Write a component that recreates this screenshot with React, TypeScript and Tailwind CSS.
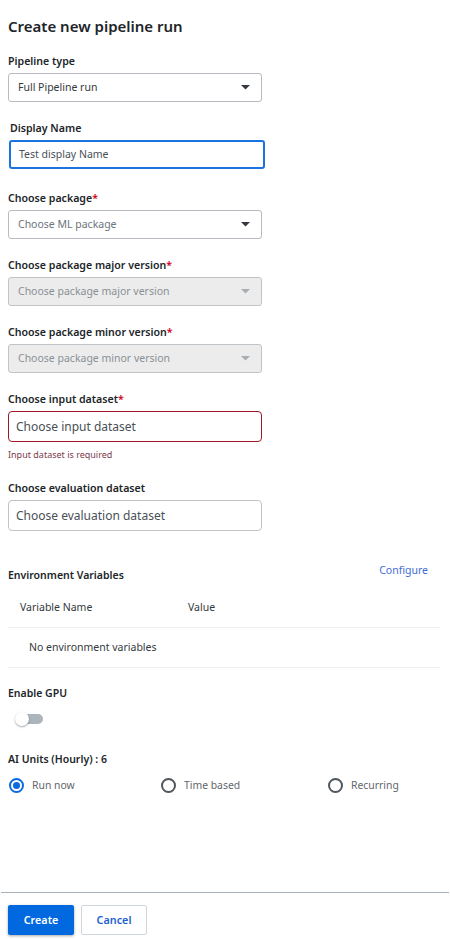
import type { ReactNode } from 'react'

const font = { fontFamily: '"Noto Sans", "Open Sans", Arial, sans-serif' }

function Label({ children, required, className = '' }: { children: ReactNode; required?: boolean; className?: string }) {
  return (
    <div className={`text-[10.6px] leading-4 font-semibold text-[#212529] mb-1 ${className}`}>
      {children}
      {required && <span className="text-[#d0021b]">*</span>}
    </div>
  )
}

function Caret({ muted }: { muted?: boolean }) {
  return (
    <svg width="9" height="5" viewBox="0 0 9 5" className="shrink-0">
      <path d="M0 0 L9 0 L4.5 4.5 Z" fill={muted ? '#a7adb3' : '#343a40'} />
    </svg>
  )
}

function Select({ value, placeholder, disabled }: { value?: string; placeholder?: string; disabled?: boolean }) {
  return (
    <div
      className={`w-[254px] h-[29px] rounded-[3px] border flex items-center justify-between pl-[9px] pr-[11px] text-[10.5px] ${
        disabled ? 'bg-[#ececec] border-[#bfc4c8] text-[#8a9096]' : 'bg-white border-[#b6bcc2]'
      }`}
    >
      <span className={value ? 'text-[#343a40]' : disabled ? '' : 'text-[#6c757d]'}>{value ?? placeholder}</span>
      <Caret muted={disabled} />
    </div>
  )
}

function Radio({ label, checked }: { label: string; checked?: boolean }) {
  return (
    <div className="flex items-center gap-[8px]">
      <span
        className={`w-[15px] h-[15px] rounded-full border-2 flex items-center justify-center ${
          checked ? 'border-[#0b6bde]' : 'border-[#4f565c]'
        }`}
      >
        {checked && <span className="w-[7px] h-[7px] rounded-full bg-[#0b6bde]" />}
      </span>
      <span className="text-[10.4px] text-[#5f666c]">{label}</span>
    </div>
  )
}

export default function App() {
  return (
    <div style={font} className="w-[450px] h-[939px] bg-white flex flex-col">
      <div className="flex-1 flex flex-col px-2 pt-[14px]">
        <h1 className="text-[15px] leading-6 font-semibold text-[#212529]">Create new pipeline run</h1>

        <div className="mt-[15px]">
          <Label>Pipeline type</Label>
          <Select value="Full Pipeline run" />
        </div>

        <div className="mt-[18px]">
          <Label className="ml-[2px]">Display Name</Label>
          <div className="ml-px w-[256px] h-[29px] rounded-[3px] border-2 border-[#1a73e0] flex items-center pl-[8px] text-[10.5px] text-[#495057]">
            Test display Name
          </div>
        </div>

        <div className="mt-[21px]">
          <Label required>Choose package</Label>
          <Select placeholder="Choose ML package" />
        </div>

        <div className="mt-[18px]">
          <Label required>Choose package major version</Label>
          <Select placeholder="Choose package major version" disabled />
        </div>

        <div className="mt-[18px]">
          <Label required>Choose package minor version</Label>
          <Select placeholder="Choose package minor version" disabled />
        </div>

        <div className="mt-[18px]">
          <Label required>Choose input dataset</Label>
          <div className="w-[254px] h-[31px] rounded-[4px] border border-[#a3162a] flex items-center pl-[7px] text-[12px] text-[#495057]">
            Choose input dataset
          </div>
          <div className="mt-[6px] text-[9px] leading-[14px] text-[#7d3b4a]">Input dataset is required</div>
        </div>

        <div className="mt-[18px]">
          <Label>Choose evaluation dataset</Label>
          <div className="w-[254px] h-[31px] rounded-[4px] border border-[#bfc4c8] flex items-center pl-[7px] text-[12px] text-[#495057]">
            Choose evaluation dataset
          </div>
        </div>

        <div className="mt-[27px] flex justify-between items-start w-[432px]">
          <div className="text-[10.5px] leading-4 font-semibold text-[#212529] mt-[9px]">Environment Variables</div>
          <div className="text-[10.5px] leading-4 text-[#3f6ed6] mr-[12px] mt-[4px]">Configure</div>
        </div>

        <div className="w-[432px] mt-[13px]">
          <div className="flex h-[32px] items-center border-b border-[#eceef0] text-[10.5px] text-[#343a40] pl-[12px] pb-[8px]">
            <span className="w-[168px]">Variable Name</span>
            <span>Value</span>
          </div>
          <div className="h-[40px] flex items-center border-b border-[#eceef0] text-[10.5px] text-[#343a40] pl-[21px]">
            No environment variables
          </div>
        </div>

        <div className="mt-[17px] text-[10.5px] leading-4 font-semibold text-[#212529]">Enable GPU</div>
        <div className="mt-[11px] ml-[7px] relative w-[28px] h-[14px] flex items-center">
          <div className="absolute left-[5px] right-0 h-[10px] rounded-full bg-[#adb5bc]" />
          <div className="absolute left-0 w-[14px] h-[14px] rounded-full bg-white shadow-[0_1px_2px_rgba(0,0,0,0.35)]" />
        </div>

        <div className="mt-[25px] text-[10.5px] leading-4 font-semibold text-[#212529]">AI Units (Hourly) : 6</div>
        <div className="mt-[11px] flex items-center ml-px">
          <div className="w-[152px]"><Radio label="Run now" checked /></div>
          <div className="w-[167px]"><Radio label="Time based" /></div>
          <Radio label="Recurring" />
        </div>
      </div>

      <div className="border-t border-[#a9b0b6] mx-px px-[7px] pt-[12px] pb-[4px] flex gap-[7px]">
        <button className="w-[66px] h-[30px] rounded-[2px] bg-[#0069e0] text-white text-[10.8px] font-semibold shadow-[0_1px_3px_rgba(0,0,0,0.35)]">
          Create
        </button>
        <button className="w-[66px] h-[30px] rounded-[2px] border border-[#cfd6dc] bg-white text-[#1f5fd0] text-[10.8px] font-semibold">
          Cancel
        </button>
      </div>
    </div>
  )
}
